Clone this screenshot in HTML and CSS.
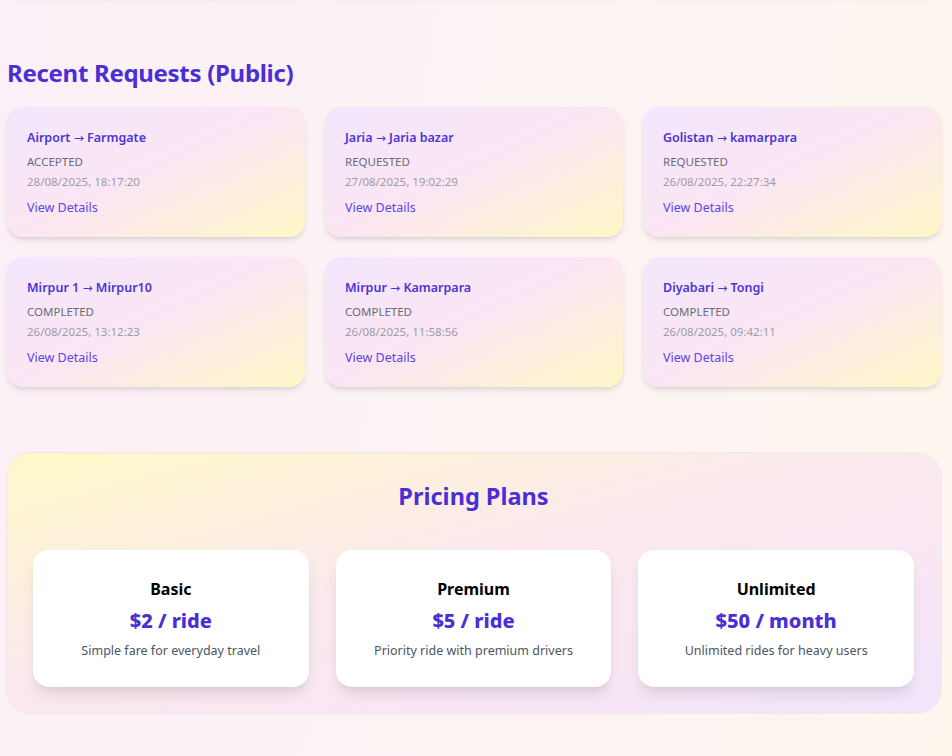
FILE: index.html
```html
<!DOCTYPE html>
<html lang="en">
<head>
<meta charset="utf-8">
<title>Recent Requests</title>
<link rel="stylesheet" href="styles.css">
</head>
<body>
<main class="page">
  <div class="prev-row">
    <div class="prev-card"></div>
    <div class="prev-card"></div>
    <div class="prev-card"></div>
  </div>

  <section class="recent">
    <h2 class="section-title">Recent Requests (Public)</h2>
    <div class="req-grid">
      <div class="req-card">
        <div class="req-route">Airport <span class="arrow">→</span> Farmgate</div>
        <div class="req-status">ACCEPTED</div>
        <div class="req-date">28/08/2025, 18:17:20</div>
        <a class="req-link" href="#">View Details</a>
      </div>
      <div class="req-card">
        <div class="req-route">Jaria <span class="arrow">→</span> Jaria bazar</div>
        <div class="req-status">REQUESTED</div>
        <div class="req-date">27/08/2025, 19:02:29</div>
        <a class="req-link" href="#">View Details</a>
      </div>
      <div class="req-card">
        <div class="req-route">Golistan <span class="arrow">→</span> kamarpara</div>
        <div class="req-status">REQUESTED</div>
        <div class="req-date">26/08/2025, 22:27:34</div>
        <a class="req-link" href="#">View Details</a>
      </div>
      <div class="req-card">
        <div class="req-route">Mirpur 1 <span class="arrow">→</span> Mirpur10</div>
        <div class="req-status">COMPLETED</div>
        <div class="req-date">26/08/2025, 13:12:23</div>
        <a class="req-link" href="#">View Details</a>
      </div>
      <div class="req-card">
        <div class="req-route">Mirpur <span class="arrow">→</span> Kamarpara</div>
        <div class="req-status">COMPLETED</div>
        <div class="req-date">26/08/2025, 11:58:56</div>
        <a class="req-link" href="#">View Details</a>
      </div>
      <div class="req-card">
        <div class="req-route">Diyabari <span class="arrow">→</span> Tongi</div>
        <div class="req-status">COMPLETED</div>
        <div class="req-date">26/08/2025, 09:42:11</div>
        <a class="req-link" href="#">View Details</a>
      </div>
    </div>
  </section>

  <section class="pricing">
    <h2 class="pricing-title">Pricing Plans</h2>
    <div class="plan-grid">
      <div class="plan-card">
        <h3 class="plan-name">Basic</h3>
        <div class="plan-price">$2 / ride</div>
        <p class="plan-desc">Simple fare for everyday travel</p>
      </div>
      <div class="plan-card">
        <h3 class="plan-name">Premium</h3>
        <div class="plan-price">$5 / ride</div>
        <p class="plan-desc">Priority ride with premium drivers</p>
      </div>
      <div class="plan-card">
        <h3 class="plan-name">Unlimited</h3>
        <div class="plan-price">$50 / month</div>
        <p class="plan-desc">Unlimited rides for heavy users</p>
      </div>
    </div>
  </section>
</main>
</body>
</html>
```

FILE: styles.css
```css
* { box-sizing: border-box; }

html, body {
  margin: 0;
  padding: 0;
}

body {
  min-height: 756px;
  overflow: hidden;
  font-family: "Noto Sans", "Open Sans", sans-serif;
  background: linear-gradient(100deg, #fbf0f7 0%, #fcf3f4 45%, #fdf7ee 100%);
}

.page {
  width: 952px;
  padding: 0 11px 40px 7px;
}

.prev-row {
  display: grid;
  grid-template-columns: repeat(3, 1fr);
  gap: 20px;
  height: 100px;
  margin-top: -104px;
}

.prev-card {
  border-radius: 16px;
  background: #fbf1f6;
  box-shadow: 0 4px 6px -1px rgba(0,0,0,0.08), 0 2px 4px -2px rgba(0,0,0,0.06);
}

.section-title {
  margin: 61px 0 18px;
  font-size: 24px;
  line-height: 32px;
  font-weight: 700;
  color: #4a2fd5;
  letter-spacing: -0.3px;
}

.req-grid {
  display: grid;
  grid-template-columns: repeat(3, 1fr);
  gap: 20px;
}

.req-card {
  height: 130px;
  padding: 21px 20px 19px;
  border-radius: 16px;
  background: linear-gradient(155deg, #f3e6fd 0%, #fbe6f3 50%, #fef7c6 100%);
  box-shadow: 0 4px 6px -1px rgba(0,0,0,0.1), 0 2px 4px -2px rgba(0,0,0,0.08);
  display: flex;
  flex-direction: column;
  align-items: flex-start;
}

.req-route {
  font-size: 12.5px;
  line-height: 20px;
  font-weight: 600;
  color: #4a35d6;
}

.arrow {
  font-family: "DejaVu Sans", sans-serif;
  font-weight: 400;
  font-size: 12px;
}

.req-status {
  margin-top: 6px;
  font-size: 11.5px;
  line-height: 16px;
  color: #6b6b78;
}

.req-date {
  margin-top: 4px;
  font-size: 11.5px;
  line-height: 16px;
  color: #9d9ca6;
}

.req-link {
  margin-top: 9px;
  font-size: 12.5px;
  line-height: 18px;
  color: #5b45e4;
  text-decoration: none;
}

.pricing {
  margin-top: 66px;
  padding: 25px 27px 26px 26px;
  border-radius: 24px;
  background: linear-gradient(165deg, #fef8c8 0%, #fbe9ee 45%, #f8e6f5 75%, #f1e6fd 100%);
  box-shadow: 0 0 0 1px rgba(240, 215, 232, 0.6);
}

.pricing-title {
  margin: 0 0 36px;
  text-align: center;
  font-size: 23.5px;
  line-height: 36px;
  font-weight: 700;
  color: #4a2fd5;
}

.plan-grid {
  display: grid;
  grid-template-columns: repeat(3, 1fr);
  gap: 27px;
}

.plan-card {
  height: 137px;
  padding: 28px 16px 27px;
  border-radius: 16px;
  background: #ffffff;
  text-align: center;
  box-shadow: 0 10px 15px -3px rgba(0,0,0,0.1), 0 4px 6px -4px rgba(0,0,0,0.08);
}

.plan-name {
  margin: 0;
  font-size: 16px;
  line-height: 22px;
  font-weight: 700;
  color: #000000;
}

.plan-price {
  margin-top: 7px;
  font-size: 20px;
  line-height: 28px;
  font-weight: 800;
  color: #4a2fd5;
}

.plan-desc {
  margin: 6px 0 0;
  font-size: 12.5px;
  line-height: 20px;
  color: #4b5563;
}
```
